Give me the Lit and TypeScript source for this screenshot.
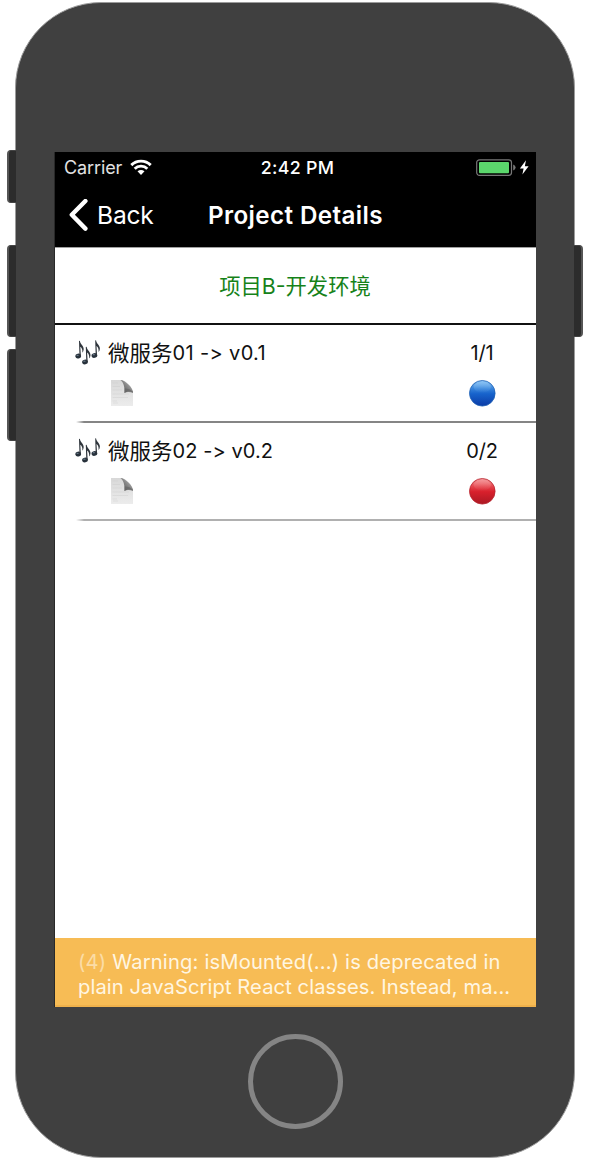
import { LitElement, html, css, svg } from "lit";
import { customElement, property } from "lit/decorators.js";

interface Service {
  name: string;
  version: string;
  replicas: string;
  healthy: boolean;
}

const note = (x: number, y: number) => svg`
  <g transform="translate(${x} ${y})">
    <ellipse cx="3" cy="15.4" rx="2.9" ry="2.4" transform="rotate(-14 3 15.4)" fill="#27313b"/>
    <path d="M4.3 15.5L3.8 .4Q4 0 4.7.3C5.2 3.6 8.6 5 8.5 8.6Q8.3 10.8 7.1 12Q7.7 7.8 5.1 6L5.7 15.5Z" fill="#2f353c"/>
    <ellipse cx="2.4" cy="14.6" rx="1.2" ry=".6" fill="#6b7c8c"/>
  </g>`;

@customElement("service-row")
export class ServiceRow extends LitElement {
  @property({ attribute: false }) service!: Service;
  @property({ type: Boolean, reflect: true }) last = false;

  static styles = css`
    :host { display: block; height: 98px; box-sizing: border-box; padding: 14px 0 0 20px; color: #111; font-size: 20px; background: #fff; }
    .top, .bottom { display: grid; grid-template-columns: 33px 1fr 108px; align-items: center; }
    .top { height: 29px; }
    .bottom { height: 53px; }
    svg { display: block; }
    .name { white-space: pre; line-height: 28px; height: 29px; font-feature-settings: "calt" 0; letter-spacing: .35px; }
    :host([last]) .name { letter-spacing: .07px; }
    .cjk { font-size: 21.5px; letter-spacing: 0; vertical-align: -1px; }
    .count { text-align: center; line-height: 28px; height: 29px; letter-spacing: -.1px; }
    .doc { margin: 0 0 3px 2px; }
    .dot { margin: 0 auto 3px; }
    .line { height: 2px; margin-left: 1px; background: linear-gradient(90deg, #fff, #858585 8px); }
    :host([last]) .line { background: linear-gradient(90deg, #fff, #b0b0b0 8px); }
  `;

  render() {
    const s = this.service;
    const [a, b, c, d, rim] = s.healthy
      ? ["#8fc6f5", "#3a86dc", "#1763cc", "#0b3ba6", "#1f62b5"]
      : ["#f59a9c", "#e5484f", "#d8202c", "#ab1823", "#b8252e"];
    return html`
      <div class="top">
        <svg width="27" height="27" viewBox="0 0 27 27">${note(0.2, 0.7)}${note(7, 6.6)}${note(16.4, 0.1)}</svg>
        <span class="name"><span class="cjk">${s.name.slice(0, 3)}</span>${s.name.slice(3)} -> ${s.version}</span>
        <span class="count">${s.replicas}</span>
      </div>
      <div class="bottom">
        <span></span>
        <svg class="doc" width="24" height="28" viewBox="0 0 24 28">
          <defs>
            <linearGradient id="p" x2="0" y2="1"><stop stop-color="#d8d8d8"/><stop offset="1" stop-color="#ececec"/></linearGradient>
            <linearGradient id="f" x1="0" y1="1" x2="1" y2="0"><stop stop-color="#4c4c4c"/><stop offset=".5" stop-color="#858585"/><stop offset="1" stop-color="#d0d0d0"/></linearGradient>
          </defs>
          <path d="M1 1H11C15 1 23 9 23 13V27H1Z" fill="url(#p)"/>
          <path d="M10.5 1C15 1 23 8.5 23 13.5C20 12 17 12 14.5 14C14.8 9 14 4 10.5 1Z" fill="url(#f)"/>
          <path d="M14.5 14L14.6 9.5Q19 9 23 12.6V14Q18 11.9 14.5 14Z" fill="#666" opacity=".7"/>
          <path d="M2.5 4H8M2.5 7.5H10M2.5 11H12M2.5 15H19M2.5 18.5H18M2.5 22H7M3 24H8" stroke="#cacaca" stroke-width=".4"/>
        </svg>
        <svg class="dot" width="28" height="28" viewBox="0 0 28 28">
          <defs>
            <linearGradient id="g" x2="0" y2="1"><stop stop-color=${a}/><stop offset=".3" stop-color=${b}/><stop offset=".52" stop-color=${c}/><stop offset="1" stop-color=${d}/></linearGradient>
            <linearGradient id="h" x2="0" y2="1"><stop stop-color=${a}/><stop offset="1" stop-color=${a} stop-opacity="0"/></linearGradient>
          </defs>
          <circle cx="14.3" cy="14.3" r="12.8" fill="url(#g)" stroke=${rim} stroke-width=".8"/>
          <ellipse cx="14.3" cy="8.1" rx="8.6" ry="5.6" fill="url(#h)" opacity=".55"/>
        </svg>
      </div>
      <div class="line"></div>
    `;
  }
}

@customElement("app-root")
export class AppRoot extends LitElement {
  static styles = css`
    :host { display: flow-root; width: 590px; height: 1160px; overflow: hidden; background: #fff; font-family: Inter, "Noto Sans CJK SC", sans-serif; }
    .device { position: relative; box-sizing: border-box; width: 560px; height: 1156px; margin: 2px 0 0 15px; padding: 149px 38px 0 39px; border: 1px solid #9b9b9b; border-radius: 86px; background: #404040; }
    .key { position: absolute; box-sizing: border-box; width: 9px; left: -9px; background: #2c2c2c; border: 1px solid #444; border-right: 0; border-left: 2px solid #555; border-radius: 4px 0 0 4px; }
    .mute { top: 147px; height: 53px; }
    .up { top: 242px; height: 92px; }
    .down { top: 346px; height: 92px; }
    .power { left: auto; right: -9px; top: 242px; height: 92px; transform: scaleX(-1); }
    .screen { width: 481px; height: 855px; display: flex; flex-direction: column; background: #fff; box-shadow: -1px 0 #292929; }
    .status { height: 31px; box-sizing: border-box; padding: 0 7px 0 9px; display: grid; grid-template-columns: 1fr auto 1fr; align-items: center; background: #000; color: #fff; font-size: 18px; }
    .carrier { display: flex; align-items: center; gap: 8px; color: #e2e2e2; letter-spacing: -.1px; }
    .time { font-weight: 500; font-size: 17.8px; letter-spacing: .3px; padding-left: 2px; }
    .power-state { justify-self: end; }
    svg { display: block; }
    .nav { height: 64px; box-sizing: border-box; padding: 0 14px; display: grid; grid-template-columns: 1fr auto 1fr; align-items: center; background: #000; color: #fff; font-size: 24.6px; }
    .back { display: flex; align-items: center; gap: 9px; letter-spacing: -.2px; }
    .title { font-weight: 600; font-size: 24.2px; letter-spacing: .4px; }
    .project { height: 78px; box-sizing: border-box; padding: 0 1px 2px 0; border-top: 1px solid #a0a0a0; border-bottom: 2px solid #111; display: flex; align-items: center; justify-content: center; color: #168219; font-size: 21.3px; }
    .list { flex: 1; }
    .warning { height: 69px; box-sizing: border-box; padding: 11px 0 0 23px; border-bottom: 2px solid #efb14b; background: #f7bc55; color: #fff6e2; font-size: 20.2px; line-height: 25.6px; white-space: nowrap; }
    .warning div { height: 25px; }
    .first { letter-spacing: .17px; }
    .second { letter-spacing: .07px; }
    .num { color: #fbdca6; }
    .home { box-sizing: border-box; width: 95px; height: 95px; margin: 27px 0 0 193px; border: 5px solid #858585; border-radius: 50%; }
  `;

  private services: Service[] = [
    { name: "微服务01", version: "v0.1", replicas: "1/1", healthy: true },
    { name: "微服务02", version: "v0.2", replicas: "0/2", healthy: false },
  ];

  render() {
    return html`
      <div class="device">
        <div class="key mute"></div><div class="key up"></div><div class="key down"></div><div class="key power"></div>
        <div class="screen">
          <div class="status">
            <div class="carrier"><span>Carrier</span>
              <svg width="22" height="17" viewBox="0 0 22 17" fill="none" stroke="#fff" stroke-width="2.9">
                <path d="M1.3 6.1C6.6.8 15.4.8 20.7 6.1M4.7 9.7C8.1 6.3 13.9 6.3 17.3 9.7"/>
                <path d="M11 16L7.5 12.3Q11 9.6 14.5 12.3Z" fill="#fff" stroke="none"/>
              </svg>
            </div>
            <span class="time">2:42 PM</span>
            <svg class="power-state" width="53" height="18" viewBox="0 0 53 18">
              <rect x=".7" y=".8" width="34.8" height="15.6" rx="2.8" fill="none" stroke="#777" stroke-width="1.2"/>
              <rect x="3" y="3" width="30" height="11.2" rx="1" fill="#5bd76c"/>
              <path d="M37.2 5.6Q39.6 6.5 39.6 8.6T37.2 11.6Z" fill="#777"/>
              <path d="M50 1.2L43.9 9.4H47.6L46.4 15.6L52.6 7.3H48.8Z" fill="#fff"/>
            </svg>
          </div>
          <div class="nav">
            <div class="back">
              <svg width="19" height="32" viewBox="0 0 19 32"><path d="M16.4 2L2.8 15.8L16.4 29.6" fill="none" stroke="#fff" stroke-width="4.4" stroke-linejoin="round" stroke-linecap="round"/></svg>
              <span>Back</span>
            </div>
            <span class="title">Project Details</span>
            <span></span>
          </div>
          <div class="project"><span>项目B-开发环境</span></div>
          <div class="list">
            ${this.services.map((s, i) => html`<service-row .service=${s} ?last=${i === this.services.length - 1}></service-row>`)}
          </div>
          <div class="warning">
            <div class="first"><span class="num">(4)</span> <span>Warning: isMounted(...) is deprecated in</span></div>
            <div class="second"><span>plain JavaScript React classes. Instead, ma...</span></div>
          </div>
        </div>
        <div class="home"></div>
      </div>
    `;
  }
}
